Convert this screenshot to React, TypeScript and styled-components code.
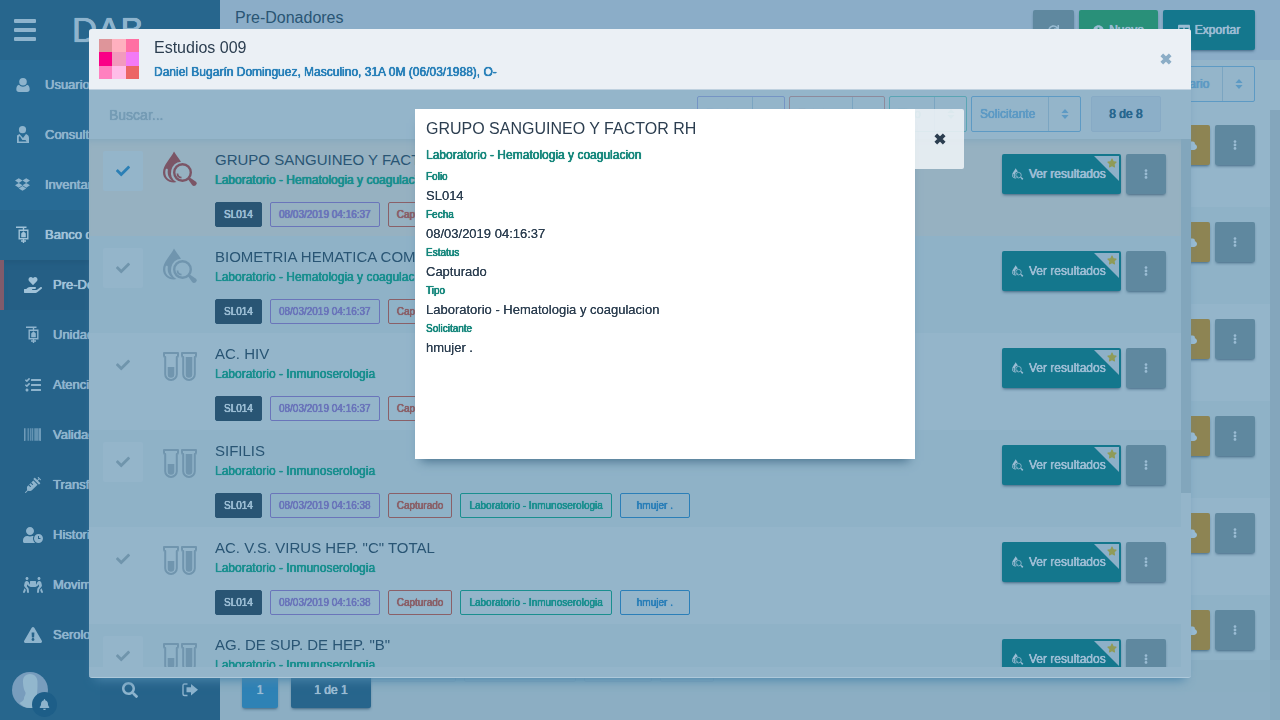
import React from "react";
import styled, { createGlobalStyle, css } from "styled-components";
import {
  FaBarcode, FaBell, FaCheck, FaCloud, FaDropbox, FaEllipsisV, FaExclamationTriangle,
  FaHandHoldingHeart, FaPeopleCarry, FaPlusCircle, FaRedo, FaSearch, FaStar,
  FaSyringe, FaTable, FaTasks, FaUser, FaUserClock,
} from "react-icons/fa";

const c = {
  text: "#295574",
  light: "#9abcd3",
  paper: "#94b5ca",
  stripe: "#8fb2c7",
  picked: "#96b1c1",
  teal: "#14778d",
  green: "#1a8f8f",
  blue: "#2b7fb8",
  purple: "#6a75ba",
  red: "#8a6068",
  slate: "#5f889f",
};

const Global = createGlobalStyle`
  *, *::before, *::after { box-sizing: border-box; }
  html, body { margin: 0; height: 100%; }
  body {
    font-family: "Liberation Sans", Arial, Helvetica, sans-serif;
    font-size: 13px;
    color: ${c.text};
    overflow: hidden;
  }
  button, input, select { font: inherit; color: inherit; margin: 0; }
  button { border: 0; padding: 0; background: none; cursor: pointer; }
  a { color: inherit; text-decoration: none; }
  h1, h2, h3, p, ul, dl, dd { margin: 0; padding: 0; }
  h1, h2, h3 { font-weight: 400; font-size: 16px; line-height: 20px; }
  svg { display: block; flex: none; }
`;

const strong = css`text-shadow: 0 0 0 currentColor, 0 0 0 currentColor, 0 0 1px currentColor;`;
const lift = css`box-shadow: 0 2px 3px -1px rgba(30, 70, 100, 0.7);`;

const Shell = styled.div`
  display: grid;
  grid-template-columns: 220px 1fr;
  height: 100vh;
  overflow: hidden;
  background: ${c.paper};
`;

/* Sidebar */
const Sidebar = styled.aside`
  display: flex;
  flex-direction: column;
  min-height: 0;
  background: #286b95;
  color: #8eb4cd;
`;
const Brand = styled.header`
  display: flex;
  align-items: center;
  flex: none;
  gap: 36px;
  height: 60px;
  padding: 0 14px;
  background: #27668d;
  font-size: 35px;
  ${strong}
`;
const Burger = styled.button`
  display: grid;
  gap: 5px;
  width: 22px;
  span { height: 4px; border-radius: 1px; background: #8eb4cd; }
`;
const Nav = styled.nav`
  flex: 1;
  min-height: 0;
  overflow: hidden;
`;
const NavLink = styled.a<{ $tone?: "open" | "sub" | "active" }>`
  display: flex;
  align-items: center;
  gap: 10px;
  height: 50px;
  padding: 0 0 1px 10px;
  white-space: nowrap;
  ${strong}
  ${p => p.$tone === "open" && "background: #27668d; color: #a0c2d8;"}
  ${p => (p.$tone === "sub" || p.$tone === "active") && "background: #26638a; padding-left: 20px; gap: 8px;"}
  ${p => p.$tone === "active" && "background: #255f85; color: #a0c2d8; border-left: 4px solid #815b6b; padding-left: 16px; box-shadow: inset 0 6px 6px -4px #21587c;"}
`;
const NavIcon = styled.span`
  display: flex;
  justify-content: center;
  width: 25px;
`;
const SideFoot = styled.footer`
  display: grid;
  grid-template-columns: 100px 60px 60px;
  flex: none;
  height: 60px;
  background: #26638a;
`;
const UserCell = styled.button`
  display: flex;
  align-items: center;
  height: 60px;
  padding-left: 12px;
  background: #27668d;
`;
const FootCell = styled.button`
  display: flex;
  align-items: center;
  justify-content: center;
`;
const Avatar = styled.span`
  position: relative;
  display: block;
`;
const BellBadge = styled.span`
  position: absolute;
  left: 20px;
  top: 20px;
  display: grid;
  place-items: center;
  width: 25px;
  height: 25px;
  border-radius: 50%;
  background: #1d5e88;
`;

/* Page behind the dialog */
const Main = styled.main`
  display: flex;
  flex-direction: column;
  min-width: 0;
  min-height: 0;
`;
const PageHead = styled.header`
  display: flex;
  justify-content: space-between;
  flex: none;
  height: 60px;
  padding: 8px 25px 0 15px;
  background: #8badc8;
`;
const PageActions = styled.div`
  display: flex;
  gap: 5px;
  padding-top: 2px;
`;
const Action = styled.button<{ $bg: string; $w?: number; $start?: boolean }>`
  position: relative;
  display: flex;
  align-items: center;
  justify-content: ${p => (p.$start ? "flex-start" : "center")};
  gap: 5px;
  flex: none;
  width: ${p => p.$w ?? 40}px;
  height: 40px;
  padding-left: ${p => (p.$start ? 10 : 0)}px;
  border-radius: 2px;
  background: ${p => p.$bg};
  color: ${c.light};
  font-size: 12px;
  white-space: nowrap;
  ${lift}
  ${strong}
`;
const Filters = styled.div`
  display: flex;
  justify-content: flex-end;
  flex: none;
  height: 50px;
  padding: 6px 25px 0 15px;
`;
const PageList = styled.div`
  flex: 1;
  min-height: 0;
  overflow: hidden;
  border-right: 10px solid #84a6bc;
`;
const PageRow = styled.div`
  display: flex;
  justify-content: flex-end;
  gap: 5px;
  height: 97px;
  padding: 15px 15px 0 110px;
  &:nth-child(even) { background: ${c.stripe}; }
`;
const Tags = styled.div`
  display: flex;
  gap: 8px;
  margin: 47px auto 0 0;
`;
const Tag = styled.span<{ $w: number }>`
  width: ${p => p.$w}px;
  height: 25px;
  border: 1px solid #6f8fb4;
  border-radius: 2px;
`;
const PageFoot = styled.footer`
  position: relative;
  display: flex;
  gap: 13px;
  flex: none;
  height: 60px;
  margin-top: -60px;
  padding: 12px 22px;
  background: rgba(138, 172, 193, 0.8);
`;
const PageButton = styled.button<{ $bg: string; $w: number }>`
  width: ${p => p.$w}px;
  height: 36px;
  border-radius: 2px;
  background: ${p => p.$bg};
  color: ${c.light};
  font-size: 12px;
  ${lift}
  ${strong}
`;

/* Bordered drop-down */
const Picker = styled.label<{ $tone: string; $w: number }>`
  display: grid;
  grid-template-columns: 1fr 31px;
  width: ${p => p.$w}px;
  height: 36px;
  border: 1px solid ${p => p.$tone};
  border-radius: 2px;
  color: ${p => p.$tone};
  select {
    min-width: 0;
    appearance: none;
    border: 0;
    border-right: 1px solid #7ba5c1;
    border-radius: 0;
    padding: 0 0 0 8px;
    background: transparent;
    font-size: 12px;
    ${strong}
  }
  svg { place-self: center; }
`;

/* Studies dialog */
const Backdrop = styled.div`
  position: fixed;
  inset: 0;
  display: flex;
  padding: 29px 89px 42px;
`;
const Dialog = styled.section`
  display: flex;
  flex-direction: column;
  flex: 1;
  min-width: 0;
  border-radius: 3px;
  background: ${c.paper};
  border-bottom: 1px solid #adc8da;
  box-shadow: 0 8px 10px -6px #4b86ac;
  overflow: hidden;
`;
const DialogHead = styled.header`
  display: flex;
  gap: 15px;
  flex: none;
  height: 61px;
  padding: 10px 17px 0 10px;
  background: #ebf0f5;
  border-bottom: 1px solid #bfd1df;
  color: #2c3e50;
`;
const HeadText = styled.div`
  flex: 1;
  margin-top: -1px;
`;
const Patient = styled.p`
  margin-top: 6px;
  font-size: 12px;
  line-height: 16px;
  color: #2980b9;
  ${strong}
`;
const CloseButton = styled.button`
  height: 40px;
  padding: 0 2px;
  color: #8badc6;
`;
const SearchBar = styled.div`
  display: flex;
  gap: 4px;
  flex: none;
  height: 49px;
  padding: 6px 30px 0 20px;
`;
const SearchInput = styled.input`
  flex: 1;
  min-width: 0;
  height: 38px;
  border: 0;
  padding: 0;
  outline: 0;
  background: transparent;
  font-size: 14px;
  ${strong}
  &::placeholder { color: #759cb5; opacity: 1; }
`;
const Count = styled.output`
  display: grid;
  place-items: center;
  width: 70px;
  height: 36px;
  margin-left: 6px;
  border: 1px solid #87aac5;
  border-radius: 2px;
  background: #8cafc8;
  color: #28668f;
  font-size: 12px;
  ${strong}
`;
const StudyArea = styled.div`
  display: flex;
  flex: 1;
  min-height: 0;
  margin-bottom: 10px;
`;
const StudyList = styled.ul`
  flex: 1;
  min-width: 0;
  list-style: none;
  overflow: hidden;
`;
const ScrollThumb = styled.div`
  width: 10px;
  height: 354px;
  background: #82a6bc;
`;
const Study = styled.li<{ $picked?: boolean }>`
  display: flex;
  height: 97px;
  padding: 12px 15px 0 14px;
  &:nth-child(even) { background: ${c.stripe}; }
  ${p => p.$picked && `background: ${c.picked}; box-shadow: inset 0 7px 6px -5px #85a8bd;`}
`;
const Tick = styled.label<{ $on?: boolean }>`
  display: grid;
  place-items: center;
  width: 40px;
  height: 40px;
  margin-right: 20px;
  border-radius: 2px;
  background: ${c.paper};
  color: ${p => (p.$on ? "#2b7fb5" : "#7095ac")};
  input, svg { grid-area: 1 / 1; }
  input { appearance: none; width: 40px; height: 40px; }
`;
const StudyIcon = styled.span<{ $on?: boolean }>`
  width: 36px;
  margin-right: 16px;
  color: ${p => (p.$on ? "#7b5566" : "#7095ae")};
`;
const StudyBody = styled.div`
  flex: 1;
  min-width: 0;
  margin-top: -1px;
`;
const StudyName = styled.h3`
  font-size: 15px;
`;
const Area = styled.p<{ $color?: string }>`
  margin-top: 1px;
  font-size: 12px;
  line-height: 18px;
  color: ${p => p.$color ?? c.green};
  ${strong}
`;
const Chips = styled.div`
  display: flex;
  gap: 8px;
  margin-top: 13px;
`;
const Chip = styled.span<{ $tone: string; $solid?: boolean; $pad?: number }>`
  height: 25px;
  padding: 0 ${p => p.$pad ?? 8}px;
  border: 1px solid ${p => p.$tone};
  border-radius: 2px;
  font-size: 10px;
  line-height: 23px;
  white-space: nowrap;
  color: ${p => (p.$solid ? c.light : p.$tone)};
  background: ${p => (p.$solid ? p.$tone : "transparent")};
  ${strong}
`;
const StudyActions = styled.div`
  display: flex;
  gap: 5px;
  padding-top: 3px;
`;
const Ribbon = styled.span`
  position: absolute;
  top: 2px;
  right: 2px;
  display: flex;
  justify-content: flex-end;
  width: 25px;
  height: 25px;
  padding: 2px;
  background: #8db0c8;
  clip-path: polygon(0 0, 100% 0, 100% 100%);
  color: #8f9b58;
`;

/* Study detail card */
const DetailLayer = styled.div`
  position: fixed;
  inset: 0;
  display: flex;
  justify-content: center;
  align-items: flex-start;
  padding: 109px 0 0 99px;
`;
const Detail = styled.section`
  width: 500px;
  height: 350px;
  padding: 10px 11px;
  background: #fff;
  color: #2c3e50;
  box-shadow: 0 8px 10px -6px #456f8b;
  dt {
    font-size: 10px;
    line-height: 16px;
    color: #16877c;
    ${strong}
  }
  dd { line-height: 22px; text-shadow: 0 0 0 currentColor; }
`;
const DetailClose = styled.button`
  display: grid;
  place-items: center;
  width: 49px;
  height: 60px;
  border-radius: 0 2px 2px 0;
  background: rgba(238, 242, 246, 0.88);
  color: #2c3e50;
`;
const DetailArea = styled(Area)`
  margin: 7px 0 5px;
`;

const stroke = { fill: "none", stroke: "currentColor" } as const;

const Cross = () => (
  <svg width="12" height="12" viewBox="0 0 12 12" {...stroke} strokeWidth="3.800">
    <path d="m1.800 1.800 8.400 8.400M10.200 1.800l-8.400 8.400" />
  </svg>
);
const Sort = () => (
  <svg width="8" height="10" viewBox="0 0 8 10" fill="currentColor">
    <path d="M4 0 7.600 4H.4zM4 10 .4 6h7.200z" />
  </svg>
);
const IvBag = () => (
  <svg width="14" height="17" viewBox="0 0 14 17" {...stroke} strokeWidth="1.400">
    <path d="M0 1.200h10.500M7.500 1v3M3.200 4.200h8.600v8.600H3.200zM7.500 13v4M5 15h5" />
    <path d="M5.200 7.500 7.500 5.300l2.300 2.200v3.700H5.200z" fill="currentColor" stroke="none" />
  </svg>
);
const Doctor = () => (
  <svg width="14" height="17" viewBox="0 0 14 17" fill="currentColor">
    <circle cx="6.500" cy="3.700" r="3.600" />
    <path d="M1 9.500 3.500 8 7 12l3-4q3 1 3 4v5H1zM2.800 11v4.500h7.800l-1.100-1.500H6.300L3.800 10z" fillRule="evenodd" />
  </svg>
);
const Person = () => (
  <svg width="14" height="14" viewBox="0 0 14 14" fill="currentColor">
    <circle cx="7" cy="3.800" r="3.800" />
    <path d="M3 6.800C1.200 7.300.3 9 .3 11.300.3 13 1.300 14 3 14h8c1.700 0 2.700-1 2.700-2.700 0-2.300-.9-4-2.700-4.500-1 1.200-2.400 1.900-4 1.900s-3-.7-4-1.900z" />
  </svg>
);
const DropLens = ({ size }: { size: number }) => (
  <svg width={size} height={size} viewBox="0 0 36 36" fill="currentColor">
    <path
      fillRule="evenodd"
      d="M11 .5C8 7 0 14 0 21.500c0 5.500 4.500 10 11 10 .8 0 1.600-.1 2.400-.4a11 11 0 0 1 4.600-20.400C15.500 7 13 3.800 11 .5zM2.500 19c-1 5.500 1.500 9.500 6.500 10.700-3-2.200-4.800-6-4.200-10.400.2-1.800-1.900-2-2.300-.3z"
    />
    <circle cx="19.500" cy="21.500" r="8.300" {...stroke} strokeWidth="2.400" />
    <path d="M14.500 22.500c0 2.500 1.800 4 4 4.200" {...stroke} strokeWidth="1.700" />
    <path d="m25 28.200 1.800-1.800 6.200 4.300c2.200 2-1.500 5.800-3.700 3.600z" />
  </svg>
);
const Tubes = () => (
  <svg width="36" height="36" viewBox="0 0 36 36" {...stroke} strokeWidth="2" strokeLinejoin="round">
    <path d="M1 8h14v2.500q0 1.500-1.200 1.500v17.200a5.800 5.800 0 0 1-11.600 0V12Q1 12 1 10.500zM19 8h14v2.500q0 1.500-1.200 1.500v17.200a5.800 5.800 0 0 1-11.600 0V12Q19 12 19 10.500z" />
    <path d="M4.700 22h6.600v7.500a3.300 3.300 0 0 1-6.600 0zM22.700 12h6.600v17.500a3.300 3.300 0 0 1-6.600 0z" fill="currentColor" stroke="none" />
  </svg>
);
const Exit = () => (
  <svg width="16" height="14" viewBox="0 0 16 14">
    <path d="M5.500 1H2.500Q1 1 1 2.500v8.500Q1 12.500 2.500 12.500h3" {...stroke} strokeWidth="1.400" />
    <path d="M4.500 4.300H9V1l7 5.700-7 5.800V9.200H4.500z" fill="currentColor" />
  </svg>
);
const Face = () => (
  <svg width="36" height="36" viewBox="0 0 36 36">
    <circle cx="18" cy="18" r="18" fill="#789dbd" />
    <path d="M18 2c-5 0-7.500 3.500-7 9 .2 4 1 7 2.500 9.500.3 3-1.500 3.500-1.500 6 0 2-3 3.500-4.500 4.500C10 34 14 36 18 36c6 0 11-2.500 14-7-4-1-7-2.500-7-6.500 0-2 .5-3 .5-11C26 6 23 2 18 2z" fill="#92b7cd" />
  </svg>
);
const Swatch = () => {
  const cells = ["#de959a", "#ffb0bf", "#ff6fa3", "#fa0086", "#f29abd", "#f37af6", "#ff80bf", "#ffbde8", "#ec6565"];
  return (
    <svg width="40" height="40" viewBox="0 0 3 3" shapeRendering="crispEdges" aria-label="Avatar">
      {cells.map((f, i) => <rect key={i} x={i % 3} y={Math.floor(i / 3)} width="1" height="1" fill={f} />)}
    </svg>
  );
};

type NavItem = { label: string; icon: React.ReactNode; tone?: "open" | "sub" | "active" };
const nav: NavItem[] = [
  { label: "Usuarios", icon: <Person /> },
  { label: "Consultas", icon: <Doctor /> },
  { label: "Inventarios", icon: <FaDropbox size={15} /> },
  { label: "Banco de Sangre", icon: <IvBag />, tone: "open" },
  { label: "Pre-Donadores", icon: <FaHandHoldingHeart size={18} />, tone: "active" },
  { label: "Unidades", icon: <IvBag />, tone: "sub" },
  { label: "Atenciones", icon: <FaTasks size={16} />, tone: "sub" },
  { label: "Validaciones", icon: <FaBarcode size={17} />, tone: "sub" },
  { label: "Transfusiones", icon: <FaSyringe size={16} />, tone: "sub" },
  { label: "Historial", icon: <FaUserClock size={20} />, tone: "sub" },
  { label: "Movimientos", icon: <FaPeopleCarry size={20} />, tone: "sub" },
  { label: "Serologia", icon: <FaExclamationTriangle size={18} />, tone: "sub" },
];

const hema = "Laboratorio - Hematologia y coagulacion";
const inmuno = "Laboratorio - Inmunoserologia";
const studies = [
  { name: "GRUPO SANGUINEO Y FACTOR RH", area: hema, date: "08/03/2019 04:16:37", picked: true },
  { name: "BIOMETRIA HEMATICA COMPLETA", area: hema, date: "08/03/2019 04:16:37" },
  { name: "AC. HIV", area: inmuno, date: "08/03/2019 04:16:37" },
  { name: "SIFILIS", area: inmuno, date: "08/03/2019 04:16:38" },
  { name: "AC. V.S. VIRUS HEP. \"C\" TOTAL", area: inmuno, date: "08/03/2019 04:16:38" },
  { name: "AG. DE SUP. DE HEP. \"B\"", area: inmuno, date: "08/03/2019 04:16:38" },
];
const details = [
  ["Folio", "SL014"],
  ["Fecha", "08/03/2019 04:16:37"],
  ["Estatus", "Capturado"],
  ["Tipo", hema],
  ["Solicitante", "hmujer ."],
];

function Select({ label, tone, w }: { label: string; tone: string; w: number }) {
  return (
    <Picker $tone={tone} $w={w}>
      <select aria-label={label} defaultValue={label}><option>{label}</option></select>
      <Sort />
    </Picker>
  );
}

export default function App() {
  return (
    <>
      <Global />
      <Shell>
        <Sidebar>
          <Brand>
            <Burger aria-label="Menu"><span /><span /><span /></Burger>
            <span>DAB</span>
          </Brand>
          <Nav>
            {nav.map(n => (
              <NavLink key={n.label} href="#" $tone={n.tone}>
                <NavIcon>{n.icon}</NavIcon>{n.label}
              </NavLink>
            ))}
          </Nav>
          <SideFoot>
            <UserCell aria-label="Perfil">
              <Avatar><Face /><BellBadge><FaBell size={11} /></BellBadge></Avatar>
            </UserCell>
            <FootCell aria-label="Buscar"><FaSearch size={16} /></FootCell>
            <FootCell aria-label="Salir"><Exit /></FootCell>
          </SideFoot>
        </Sidebar>

        <Main>
          <PageHead>
            <h1>Pre-Donadores</h1>
            <PageActions>
              <Action $bg={c.slate} $w={41} aria-label="Recargar"><FaRedo size={11} /></Action>
              <Action $bg="#299079" $w={79}><FaPlusCircle size={11} />Nuevo</Action>
              <Action $bg={c.teal} $w={92}><FaTable size={12} />Exportar</Action>
            </PageActions>
          </PageHead>
          <Filters><Select label="Usuario" tone="#5d9ac4" w={96} /></Filters>
          <PageList>
            {[1, 2, 3, 4, 5, 6].map(n => (
              <PageRow key={n}>
                <Tags aria-hidden>
                  <Tag $w={126} /><Tag $w={112} /><Tag $w={68} /><Tag $w={54} />
                </Tags>
                <Action $bg="#8d8453" aria-label="Descargar"><FaCloud size={14} /></Action>
                <Action $bg={c.slate} aria-label="Opciones"><FaEllipsisV size={10} /></Action>
              </PageRow>
            ))}
          </PageList>
          <PageFoot>
            <PageButton $bg="#2e82b5" $w={36}>1</PageButton>
            <PageButton $bg="#27658c" $w={80}>1 de 1</PageButton>
          </PageFoot>
        </Main>
      </Shell>

      <Backdrop>
        <Dialog role="dialog" aria-label="Estudios 009">
          <DialogHead>
            <Swatch />
            <HeadText>
              <h2>Estudios 009</h2>
              <Patient>Daniel Bugarín Dominguez, Masculino, 31A 0M (06/03/1988), O-</Patient>
            </HeadText>
            <CloseButton aria-label="Cerrar"><Cross /></CloseButton>
          </DialogHead>
          <SearchBar>
            <SearchInput aria-label="Buscar" placeholder="Buscar..." />
            <Select label="Fecha" tone="#7594c4" w={88} />
            <Select label="Estatus" tone="#8d8a9c" w={96} />
            <Select label="Tipo" tone="#5aa5b4" w={78} />
            <Select label="Solicitante" tone="#5d9ac4" w={110} />
            <Count>8 de 8</Count>
          </SearchBar>
          <StudyArea>
            <StudyList>
              {studies.map(s => (
                <Study key={s.name} $picked={s.picked}>
                  <Tick $on={s.picked}>
                    <input type="checkbox" defaultChecked={s.picked} aria-label={s.name} />
                    <FaCheck size={14} />
                  </Tick>
                  <StudyIcon $on={s.picked}>{s.area === hema ? <DropLens size={36} /> : <Tubes />}</StudyIcon>
                  <StudyBody>
                    <StudyName>{s.name}</StudyName>
                    <Area>{s.area}</Area>
                    <Chips>
                      <Chip $tone="#295574" $solid>SL014</Chip>
                      <Chip $tone={c.purple}>{s.date}</Chip>
                      <Chip $tone={c.red}>Capturado</Chip>
                      <Chip $tone={c.green}>{s.area}</Chip>
                      <Chip $tone={c.blue} $pad={16}>hmujer .</Chip>
                    </Chips>
                  </StudyBody>
                  <StudyActions>
                    <Action $bg={c.teal} $w={119} $start>
                      <DropLens size={12} />Ver resultados
                      <Ribbon><FaStar size={10} /></Ribbon>
                    </Action>
                    <Action $bg={c.slate} aria-label="Opciones"><FaEllipsisV size={10} /></Action>
                  </StudyActions>
                </Study>
              ))}
            </StudyList>
            <ScrollThumb />
          </StudyArea>
        </Dialog>
      </Backdrop>

      <DetailLayer>
        <Detail role="dialog" aria-label="Detalle del estudio">
          <h2>GRUPO SANGUINEO Y FACTOR RH</h2>
          <DetailArea $color="#16877c">{hema}</DetailArea>
          <dl>
            {details.map(([k, v]) => (
              <React.Fragment key={k}><dt>{k}</dt><dd>{v}</dd></React.Fragment>
            ))}
          </dl>
        </Detail>
        <DetailClose aria-label="Cerrar detalle"><Cross /></DetailClose>
      </DetailLayer>
    </>
  );
}
